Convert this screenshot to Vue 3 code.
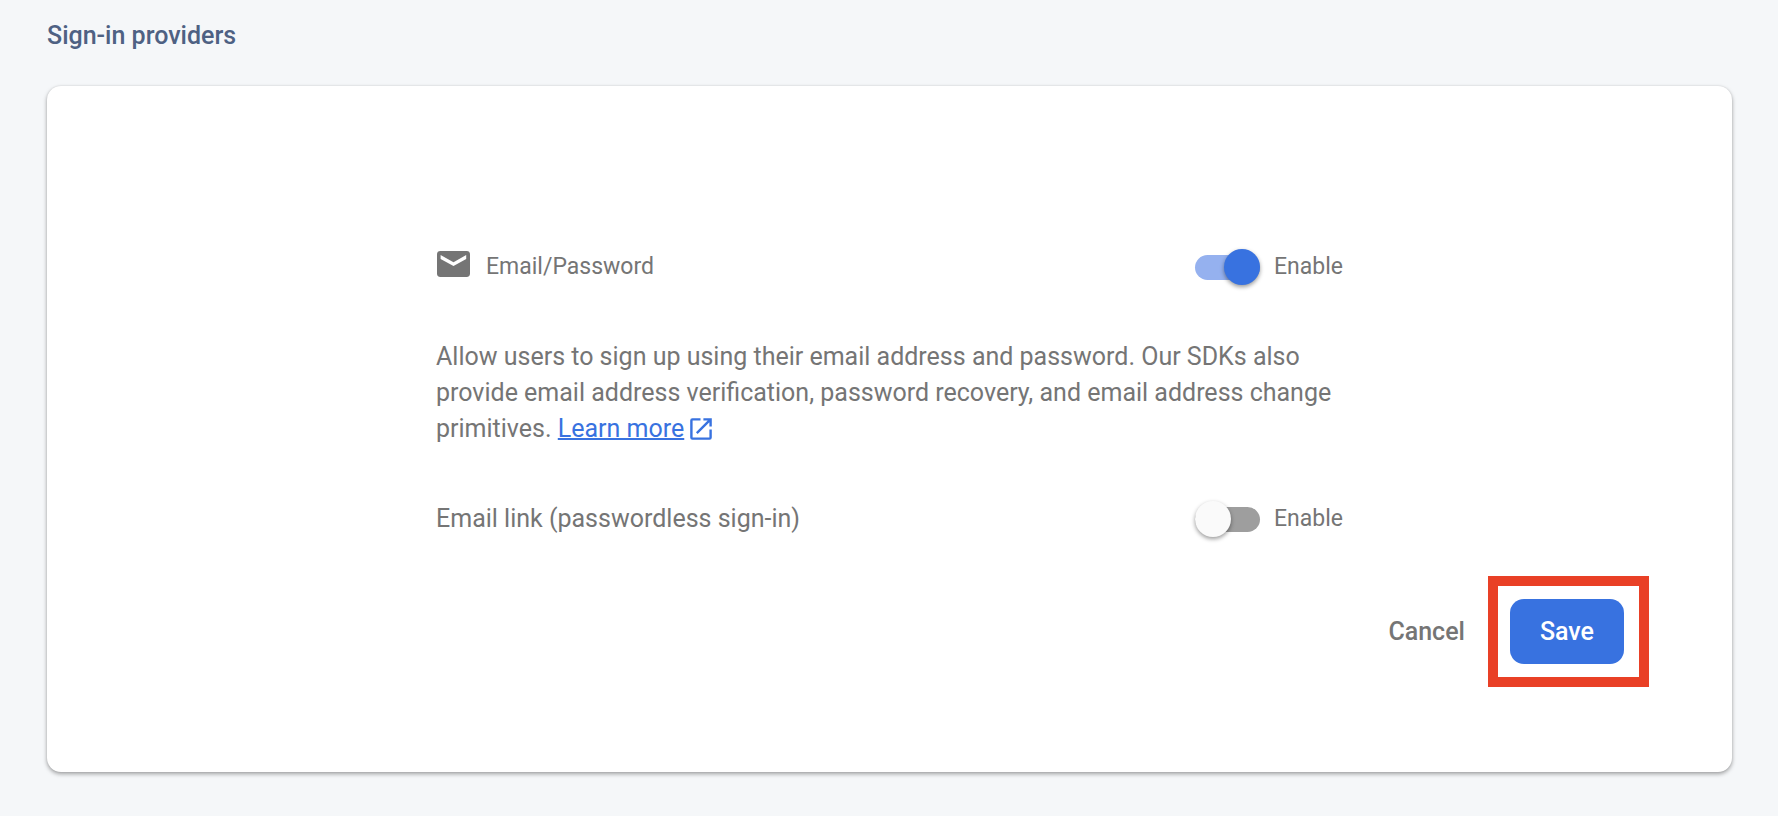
<script setup>
import { ref } from 'vue'

const passwordEnabled = ref(true)
const linkEnabled = ref(false)
</script>

<template>
  <main class="page">
    <h2 class="title">Sign-in providers</h2>
    <form class="card" @submit.prevent>
      <div class="content">
        <div class="row">
          <span class="provider">
            <svg class="mail" viewBox="0 0 33 26" aria-hidden="true">
              <rect width="33" height="26" rx="3.4" fill="#757575" />
              <path d="M3.6 4.1L16.5 11.2L29.2 4.1V8L16.5 15.1L3.6 8Z" fill="#fff" />
            </svg>
            <span>Email/Password</span>
          </span>
          <label class="toggle">
            <input v-model="passwordEnabled" class="switch" type="checkbox" />
            <span>Enable</span>
          </label>
        </div>
        <p class="description">
          Allow users to sign up using their email address and password. Our SDKs also provide email
          address verification, password recovery, and email address change primitives.
          <a class="link" href="#"><span class="link-text">Learn more</span><svg class="external" viewBox="0 0 22 22" aria-hidden="true">
            <path d="M10.5 1.4H2.4a1 1 0 0 0-1 1V19.6a1 1 0 0 0 1 1H19.6a1 1 0 0 0 1-1V11.6M13.4 1.4H20.6V8.6M20.3 1.7L6.8 15.2" fill="none" stroke="currentColor" stroke-width="2.4" />
          </svg></a>
        </p>
        <div class="row">
          <span>Email link (passwordless sign-in)</span>
          <label class="toggle">
            <input v-model="linkEnabled" class="switch" type="checkbox" />
            <span>Enable</span>
          </label>
        </div>
      </div>
      <div class="actions">
        <button class="button" type="button">Cancel</button>
        <span class="highlight">
          <button class="button primary" type="submit">Save</button>
        </span>
      </div>
    </form>
  </main>
</template>

<style>
html {
  min-height: 100%;
  background: #f5f7f9;
}
</style>

<style scoped>
.page {
  box-sizing: border-box;
  padding: 18px 46px 44px 47px;
  font-family: Roboto, "Liberation Sans", sans-serif;
  font-size: 25px;
  line-height: 36px;
  color: #757575;
}
.title {
  margin: 0 0 32px;
  font-size: 25px;
  font-weight: 500;
  color: #4e6183;
}
.card {
  padding: 162px 108px 108px;
  border-radius: 14px;
  background: #fff;
  box-shadow: 0 2px 4px rgba(0, 0, 0, 0.35), 0 0 2px rgba(0, 0, 0, 0.1);
}
.content {
  max-width: 907px;
  margin: 0 auto;
}
.row {
  display: flex;
  align-items: center;
  justify-content: space-between;
  line-height: 38px;
}
.provider {
  display: flex;
  align-items: center;
  gap: 16px;
  font-size: 23px;
}
.mail {
  width: 33px;
  height: 26px;
  margin: 0 0 6px 1px;
}
.toggle {
  display: flex;
  align-items: center;
  gap: 14px;
  font-size: 23px;
  cursor: pointer;
}
.switch {
  appearance: none;
  display: flex;
  align-items: center;
  width: 65px;
  height: 36px;
  margin: 0;
  border-radius: 18px;
  position: relative;
  cursor: pointer;
}
.switch::before {
  content: "";
  flex: 1;
  height: 25px;
  border-radius: 13px;
  background: #9e9e9e;
}
.switch::after {
  content: "";
  position: absolute;
  left: 0;
  top: 0;
  width: 36px;
  height: 36px;
  border-radius: 50%;
  background: #fafafa;
  box-shadow: 0 2px 4px rgba(0, 0, 0, 0.4);
}
.switch:checked::before {
  background: #95b1ef;
}
.switch:checked::after {
  left: auto;
  right: 0;
  background: #3872e0;
}
.description {
  margin: 53px 0;
}
.link {
  color: #3872e0;
  text-decoration: none;
  white-space: nowrap;
}
.link-text {
  text-decoration: underline;
  text-decoration-thickness: 2px;
}
.external {
  width: 22px;
  height: 22px;
  margin-left: 6px;
  vertical-align: -3px;
}
.actions {
  display: flex;
  justify-content: flex-end;
  gap: 15px;
  margin-top: 61px;
}
.button {
  height: 65px;
  padding: 0 30px;
  border: 0;
  border-radius: 14px;
  background: transparent;
  color: #757575;
  font: 500 25px/36px Roboto, "Liberation Sans", sans-serif;
  cursor: pointer;
}
.primary {
  display: block;
  background: #3872e0;
  color: #fff;
}
.highlight {
  position: relative;
}
.highlight::after {
  content: "";
  position: absolute;
  inset: -23px -25px -23px -22px;
  border: 10px solid #e94026;
  pointer-events: none;
}
</style>
